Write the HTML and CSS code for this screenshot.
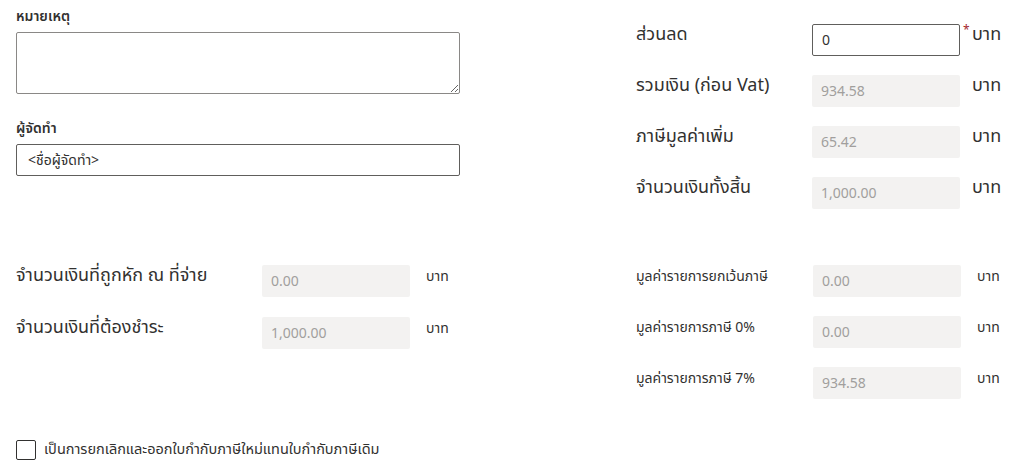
FILE: index.html
```html
<!DOCTYPE html>
<html lang="th">
<head>
<meta charset="UTF-8" />
<meta name="viewport" content="width=device-width, initial-scale=1" />
<title>สรุปใบกำกับภาษี</title>
<link rel="stylesheet" href="styles.css">
</head>
<body>
<div class="page">
  <div class="top">
    <div class="notes">
      <label class="field-label" for="remark">หมายเหตุ</label>
      <textarea id="remark" class="remark"></textarea>
      <label class="field-label" for="maker">ผู้จัดทำ</label>
      <input type="text" id="maker" class="maker" value="<ชื่อผู้จัดทำ>" />
    </div>

    <div class="summary">
      <div class="row">
        <span class="row-label">ส่วนลด</span>
        <input type="text" class="box box-edit" value="0" />
        <span class="req">*</span>
        <span class="unit">บาท</span>
      </div>
      <div class="row">
        <span class="row-label">รวมเงิน (ก่อน Vat)</span>
        <input type="text" class="box" value="934.58" readonly />
        <span class="req"></span>
        <span class="unit">บาท</span>
      </div>
      <div class="row">
        <span class="row-label">ภาษีมูลค่าเพิ่ม</span>
        <input type="text" class="box" value="65.42" readonly />
        <span class="req"></span>
        <span class="unit">บาท</span>
      </div>
      <div class="row">
        <span class="row-label">จำนวนเงินทั้งสิ้น</span>
        <input type="text" class="box" value="1,000.00" readonly />
        <span class="req"></span>
        <span class="unit">บาท</span>
      </div>
    </div>
  </div>

  <div class="middle">
    <div class="pay">
      <div class="row">
        <span class="pay-label">จำนวนเงินที่ถูกหัก ณ ที่จ่าย</span>
        <input type="text" class="box" value="0.00" readonly />
        <span class="small-unit">บาท</span>
      </div>
      <div class="row">
        <span class="pay-label">จำนวนเงินที่ต้องชำระ</span>
        <input type="text" class="box" value="1,000.00" readonly />
        <span class="small-unit">บาท</span>
      </div>
    </div>

    <div class="tax">
      <div class="row">
        <span class="tax-label">มูลค่ารายการยกเว้นภาษี</span>
        <input type="text" class="box" value="0.00" readonly />
        <span class="small-unit">บาท</span>
      </div>
      <div class="row">
        <span class="tax-label">มูลค่ารายการภาษี 0%</span>
        <input type="text" class="box" value="0.00" readonly />
        <span class="small-unit">บาท</span>
      </div>
      <div class="row">
        <span class="tax-label">มูลค่ารายการภาษี 7%</span>
        <input type="text" class="box" value="934.58" readonly />
        <span class="small-unit">บาท</span>
      </div>
    </div>
  </div>

  <label class="replace">
    <input type="checkbox" class="check-box" />
    <span>เป็นการยกเลิกและออกใบกำกับภาษีใหม่แทนใบกำกับภาษีเดิม</span>
  </label>
</div>
</body>
</html>
```

FILE: styles.css
```css
body {
  margin: 0;
  font-family: "Segoe UI", "Noto Sans Thai", "Noto Sans", "Leelawadee UI", sans-serif;
  color: #323130;
  background: #fff;
}
.page {
  padding: 0 16px;
}
.top {
  display: flex;
}
.notes {
  width: 444px;
  padding-top: 2px;
}
.field-label {
  display: block;
  font-size: 14px;
  font-weight: 600;
  line-height: 20px;
  padding: 5px 0;
}
.remark {
  display: block;
  width: 444px;
  height: 62px;
  box-sizing: border-box;
  margin: 0 0 20px 0;
  border: 1px solid #8a8886;
  border-radius: 2px;
  resize: vertical;
  font: inherit;
}
.maker {
  display: block;
  width: 444px;
  height: 32px;
  box-sizing: border-box;
  margin: 0;
  padding: 0 11px;
  border: 1px solid #605e5c;
  border-radius: 2px;
  font-family: inherit;
  font-size: 14px;
  color: #323130;
}
.summary {
  margin-left: 176px;
  padding-top: 24px;
  display: flex;
  flex-direction: column;
  gap: 19px;
}
.row {
  display: flex;
  align-items: flex-start;
}
.row-label {
  width: 176px;
  font-size: 18px;
  line-height: 22px;
}
.box {
  width: 148px;
  height: 32px;
  box-sizing: border-box;
  margin: 0;
  padding: 0 9px;
  border: none;
  border-radius: 2px;
  background: #f3f2f1;
  color: #a19f9d;
  font-family: inherit;
  font-size: 14px;
  outline: none;
}
.box-edit {
  background: #fff;
  color: #323130;
  border: 1px solid #605e5c;
}
.req {
  width: 12px;
  color: #a4262c;
  font-size: 12px;
  line-height: 12px;
  padding-left: 3px;
  box-sizing: border-box;
}
.unit {
  font-size: 18px;
  line-height: 22px;
}
.middle {
  display: flex;
  margin-top: 56px;
}
.pay {
  width: 620px;
  display: flex;
  flex-direction: column;
  gap: 20px;
}
.pay-label {
  width: 246px;
  font-size: 18px;
  line-height: 22px;
}
.tax {
  display: flex;
  flex-direction: column;
  gap: 19px;
}
.tax-label {
  width: 177px;
  font-size: 14px;
  line-height: 24px;
}
.small-unit {
  margin-left: 16px;
  font-size: 14px;
  line-height: 24px;
}
.replace {
  display: flex;
  align-items: center;
  margin-top: 40px;
  font-size: 14.5px;
}
.check-box {
  appearance: none;
  width: 20px;
  height: 20px;
  margin: 0 8px 0 0;
  border: 1px solid #323130;
  border-radius: 2px;
  background: #fff;
}
```
